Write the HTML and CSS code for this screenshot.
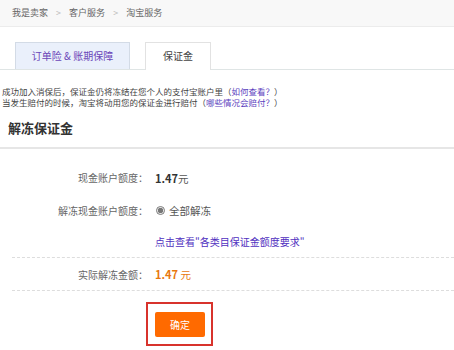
FILE: index.html
```html
<!DOCTYPE html>
<html lang="zh-CN">
<head>
    <meta charset="UTF-8">
    <title>淘宝服务 - 保证金</title>
    <link rel="stylesheet" href="styles.css">
</head>
<body>
    <div class="crumbs">
        <a href="#">我是卖家</a>
        <span class="sep">&gt;</span>
        <a href="#">客户服务</a>
        <span class="sep">&gt;</span>
        <a href="#">淘宝服务</a>
    </div>

    <div class="tabs">
        <a class="tab" href="#">订单险 &amp; 账期保障</a>
        <a class="tab active" href="#">保证金</a>
    </div>

    <div class="notice">
        <p>成功加入消保后，保证金仍将冻结在您个人的支付宝账户里（<a href="#">如何查看？</a>）</p>
        <p>当发生赔付的时候，淘宝将动用您的保证金进行赔付（<a href="#">哪些情况会赔付？</a>）</p>
    </div>

    <h2 class="section-title">解冻保证金</h2>

    <div class="form">
        <div class="row">
            <span class="label">现金账户额度：</span>
            <span class="value"><b>1.47</b>元</span>
        </div>
        <div class="row">
            <span class="label">解冻现金账户额度：</span>
            <label class="value radio"><input type="radio" checked> 全部解冻</label>
        </div>
        <div class="row link-row">
            <span class="label"></span>
            <a class="value" href="#">点击查看"各类目保证金额度要求"</a>
        </div>
        <div class="row total">
            <span class="label">实际解冻金额：</span>
            <span class="value"><b>1.47</b> 元</span>
        </div>
        <div class="actions">
            <span class="highlight"><button class="btn">确定</button></span>
        </div>
    </div>
</body>
</html>
```

FILE: styles.css
```css
body {
    margin: 0;
    background-color: #fff;
    font-family: "Noto Sans CJK SC", "Liberation Sans", sans-serif;
    font-size: 10px;
    color: #555;
}
a {
    text-decoration: none;
}
.crumbs {
    height: 26px;
    line-height: 26px;
    padding-left: 12px;
    background-color: #f8f8f8;
    border-bottom: 1px solid #ececec;
    font-size: 9px;
}
.crumbs a {
    color: #666;
}
.crumbs .sep {
    color: #bbb;
    margin: 0 6px;
}
.tabs {
    display: flex;
    gap: 15px;
    margin-top: 15px;
    padding-left: 15px;
    border-bottom: 1px solid #dfe5e5;
}
.tab {
    display: block;
    height: 26px;
    line-height: 26px;
    text-align: center;
    border: 1px solid #d3dbe6;
    border-bottom: none;
    font-size: 10px;
}
.tab:first-child {
    width: 113px;
    background-color: #eaf0fb;
    color: #6a45b8;
}
.tab.active {
    width: 64px;
    background-color: #fff;
    border-color: #e2e2e2;
    color: #444;
    margin-bottom: -1px;
    height: 27px;
}
.notice {
    margin-top: 16px;
    padding-left: 2px;
    font-size: 8.5px;
    line-height: 11px;
    color: #444;
}
.notice p {
    margin: 0;
    height: 11px;
    overflow: visible;
}
.notice a {
    color: #5b3fc0;
}
.section-title {
    margin: 0;
    padding: 11px 0 10px 8px;
    font-size: 13px;
    line-height: 18px;
    color: #333;
    border-bottom: 2px solid #e6e6e6;
}
.form {
    padding-top: 12px;
}
.row {
    display: grid;
    grid-template-columns: 148px 1fr;
    column-gap: 7px;
    align-items: center;
    height: 33px;
}
.label {
    text-align: right;
    color: #666;
    font-size: 10px;
}
.value {
    color: #555;
    font-size: 10.5px;
}
.value b {
    color: #333;
    font-size: 11px;
}
.radio {
    display: flex;
    align-items: center;
    gap: 2px;
}
.radio input {
    margin: 0 2px 0 1px;
    width: 9px;
    height: 9px;
    accent-color: #777;
}
.link-row {
    height: 28px;
    border-bottom: 1px dashed #ddd;
    margin-left: 12px;
    grid-template-columns: 136px 1fr;
    padding-bottom: 2px;
}
.link-row .value {
    color: #5030c0;
    font-size: 10px;
}
.total {
    margin-left: 12px;
    grid-template-columns: 136px 1fr;
    height: 32px;
    border-bottom: 1px dashed #ddd;
}
.total .value,
.total .value b {
    color: #e8780f;
}
.actions {
    padding: 11px 0 0 146px;
}
.highlight {
    display: inline-block;
    padding: 8px 6px 7px 7px;
    border: 2px solid #d8332c;
}
.btn {
    display: block;
    width: 50px;
    height: 25px;
    border: none;
    border-radius: 2px;
    background-color: #ff6a00;
    color: #fff;
    font-family: inherit;
    font-size: 10px;
}
```
